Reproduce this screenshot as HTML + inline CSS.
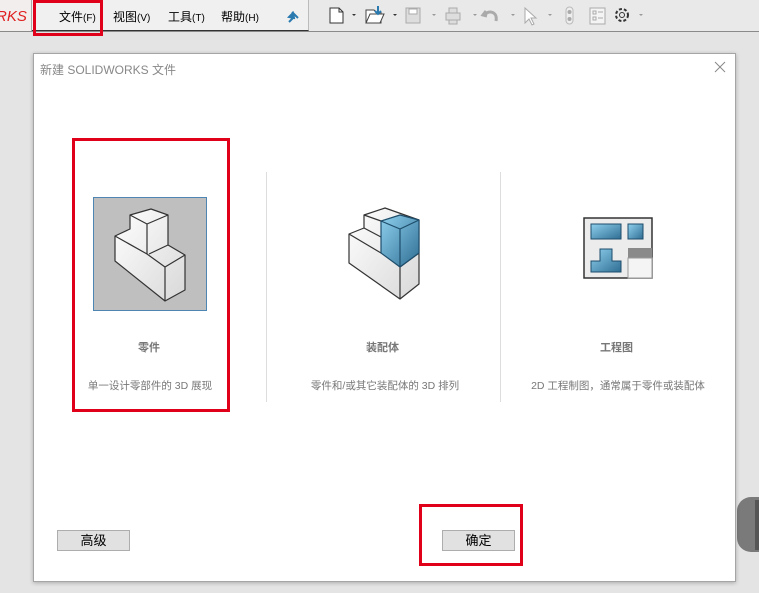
<!DOCTYPE html>
<html><head><meta charset="utf-8"><style>
body{margin:0;width:759px;height:593px;background:#e4e4e4;position:relative;overflow:hidden;font-family:"Liberation Sans","Microsoft YaHei","Noto Sans CJK SC",sans-serif;}
.a{position:absolute}
.t{font-size:12px;color:#000}
.g{color:#777;font-size:10.5px}
</style></head><body>
<div class="a" style="left:0;top:0;width:759px;height:31px;background:#e9e9e9;border-bottom:1px solid #8a8a8a"></div>
<div class="a" style="left:0;top:0;width:31px;height:31px;background:#f2eeee;border-right:1px solid #aaa"></div>
<div class="a" style="left:-4px;top:8px;color:#e02020;font-size:15px;font-style:italic">RKS</div>
<div class="a" style="left:32px;top:0;width:276px;height:30px;background:#f0f0f0;border-right:1px solid #bbb;border-bottom:1px solid #333"></div>
<div class="a t" style="left:59px;top:8px;font-size:12px">文件<span style="font-size:10px">(F)</span></div>
<div class="a t" style="left:113px;top:8px">视图<span style="font-size:10px">(V)</span></div>
<div class="a t" style="left:168px;top:8px">工具<span style="font-size:10px">(T)</span></div>
<div class="a t" style="left:221px;top:8px">帮助<span style="font-size:10px">(H)</span></div>
<div class="a" style="left:33px;top:0;width:64px;height:30px;border:3px solid #e0001a"></div>
<svg class="a" style="left:0;top:0" width="759" height="593">
<path d="M289 22l5-5M292 12l6 6M293 13l-4 4 5 1z" stroke="#2a7ab0" stroke-width="2" fill="#2a7ab0"/>
<path d="M330 8h9l4 4v11h-13z" fill="#fff" stroke="#333"/><path d="M339 8v4h4" fill="none" stroke="#333"/>
<path d="M352 14h4l-2 2z" fill="#333"/>
<path d="M366 10h8l2 2h5v11h-15z" fill="#fff" stroke="#444"/><path d="M370 14h14l-4 9h-14z" fill="#fff" stroke="#444"/><path d="M378 6v8m-3-3l3 3 3-3" stroke="#2a7ab0" stroke-width="2" fill="none"/>
<path d="M393 14h4l-2 2z" fill="#333"/>
<rect x="406" y="8" width="14" height="15" fill="#ddd" stroke="#aaa"/><rect x="409" y="9" width="8" height="5" fill="#fff" stroke="#aaa"/>
<path d="M432 14h4l-2 2z M473 14h4l-2 2z M511 14h4l-2 2z M548 14h4l-2 2z M639 14h4l-2 2z" fill="#999"/>
<path d="M446 13h14v7h-14z M449 8h8v5h-8z M449 20h8v4h-8z" fill="#ddd" stroke="#aaa"/>
<path d="M486 11l-3 4 4 1M484 15c4-5 14-4 12 6" stroke="#aaa" stroke-width="3" fill="none"/>
<path d="M525 8v15l4-4 3 6 2-1-3-6h5z" fill="#fff" stroke="#aaa"/>
<rect x="566" y="7" width="7" height="17" rx="3.5" fill="#eee" stroke="#bbb"/><circle cx="569.5" cy="12" r="2" fill="#aaa"/><circle cx="569.5" cy="19" r="2" fill="#aaa"/>
<rect x="590" y="8" width="15" height="16" fill="#f4f4f4" stroke="#aaa"/><path d="M593 11h3v3h-3zM593 17h3v3h-3zM598 12h5M598 18h5" stroke="#aaa" fill="none"/>
<circle cx="622" cy="15" r="6" fill="none" stroke="#333" stroke-width="2" stroke-dasharray="3 2"/><circle cx="622" cy="15" r="2.5" fill="none" stroke="#333"/>
</svg>
<div class="a" style="left:737px;top:497px;width:22px;height:55px;background:#7a7a7a;border-radius:14px 0 0 14px"></div>
<div class="a" style="left:755px;top:500px;width:4px;height:50px;background:#555"></div>
<div class="a" style="left:33px;top:53px;width:701px;height:527px;background:#fff;border:1px solid #a5a5a5;box-shadow:0 1px 4px rgba(0,0,0,.25)"></div>
<div class="a" style="left:40px;top:61px;color:#888;font-size:12px">新建 SOLIDWORKS 文件</div>
<svg class="a" style="left:714px;top:61px" width="12" height="12"><path d="M1 1L11 11M11 1L1 11" stroke="#888" stroke-width="1"/></svg>
<div class="a" style="left:266px;top:172px;width:1px;height:230px;background:#ddd"></div>
<div class="a" style="left:500px;top:172px;width:1px;height:230px;background:#ddd"></div>
<div class="a" style="left:93px;top:197px;width:112px;height:112px;background:#bfbfbf;border:1px solid #4d86b3"></div>
<svg class="a" style="left:0;top:0" width="759" height="593">
<defs><linearGradient id="w" x1="0" y1="0" x2="1" y2="1"><stop offset="0" stop-color="#fff"/><stop offset="1" stop-color="#d8d8d8"/></linearGradient>
<linearGradient id="b" x1="0" y1="0" x2="1" y2="1"><stop offset="0" stop-color="#8fd0ee"/><stop offset="1" stop-color="#2f6e93"/></linearGradient></defs>
<g stroke="#333" stroke-width="1.2" stroke-linejoin="round" fill="url(#w)">
<path d="M115 236L130 229V215L151 209L168 215V245L185 255V290L165 301L115 261Z"/>
<path d="M130 215L147 224V254L165 267V301M147 224L168 215M149 254L168 245M165 267L185 255M115 236L147 254" fill="none"/>
</g>
<g stroke="#333" stroke-width="1.2" stroke-linejoin="round" fill="url(#w)">
<path d="M349 234L364 228V215L385 208L419 220V284L400 299L349 263Z"/>
<path d="M364 215L381 221M364 228L381 237M349 234L381 253M400 267V299M400 267L419 253" fill="none"/>
<path d="M381 221L400 215L419 220V253L400 267L381 253Z" fill="url(#b)" stroke="#1e4d6b"/>
<path d="M381 221L400 229L419 220M400 229V267" fill="none" stroke="#1e4d6b"/>
</g>
<rect x="584" y="218" width="68" height="60" fill="#ececec" stroke="#333" stroke-width="1.5"/>
<g fill="url(#b)" stroke="#1e4d6b"><rect x="591" y="224" width="30" height="15"/><rect x="628" y="224" width="15" height="15"/><path d="M600 249h12v12h9v11h-30v-11h9z"/></g>
<rect x="628" y="248" width="24" height="10" fill="#8a8a8a"/><rect x="628" y="258" width="24" height="20" fill="#f4f4f4" stroke="#999"/>
</svg>
<div class="a" style="left:138px;top:339px;color:#777;font-size:11px;font-weight:bold">零件</div>
<div class="a" style="left:366px;top:339px;color:#777;font-size:11px;font-weight:bold">装配体</div>
<div class="a" style="left:600px;top:339px;color:#777;font-size:11px;font-weight:bold">工程图</div>
<div class="a g" style="left:80px;top:378px;width:140px;text-align:center">单一设计零部件的 3D 展现</div>
<div class="a g" style="left:290px;top:378px;width:190px;text-align:center">零件和/或其它装配体的 3D 排列</div>
<div class="a g" style="left:518px;top:378px;width:200px;text-align:center">2D 工程制图，通常属于零件或装配体</div>
<div class="a" style="left:72px;top:138px;width:152px;height:268px;border:3px solid #e0001a"></div>
<div class="a t" style="left:57px;top:530px;width:71px;height:19px;background:#e1e1e1;border:1px solid #adadad;text-align:center;line-height:19px;font-size:13px">高级</div>
<div class="a t" style="left:442px;top:530px;width:71px;height:19px;background:#e1e1e1;border:1px solid #adadad;text-align:center;line-height:19px;font-size:13px">确定</div>
<div class="a" style="left:419px;top:504px;width:98px;height:56px;border:3px solid #e0001a"></div>
</body></html>
